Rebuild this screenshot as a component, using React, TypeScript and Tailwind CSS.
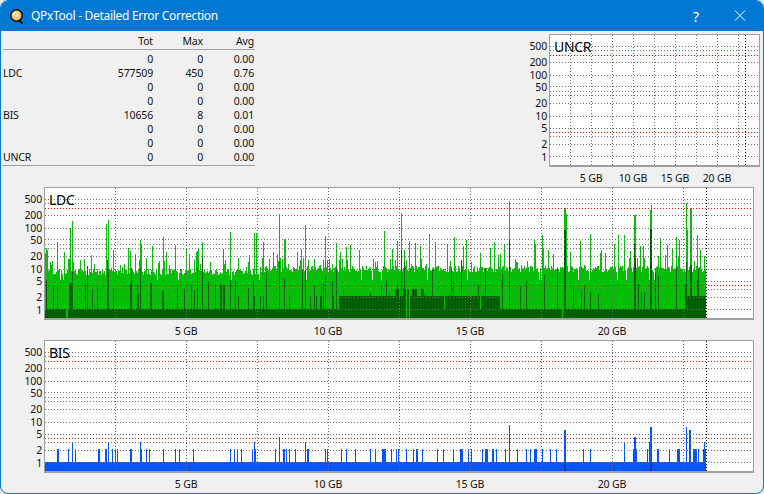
import type { ReactNode } from "react";

// y rows of the log scale, measured from the top edge of a chart frame
const yLabels: [string, number][] = [["500", 12], ["200", 28], ["100", 41], ["50", 53], ["20", 69], ["10", 82], ["5", 94], ["2", 110], ["1", 123]];
const greyRows = [12, 16, 28, 41, 52, 57, 61, 69, 82, 94, 102, 110, 122];
const redRows = [21, 98];

const bigTicks = [115, 186, 257, 328, 399, 470, 541, 612, 683];
const smallTicks = [570, 591, 612, 633, 654, 675, 696, 717, 738];

const rows = [
  ["", "0", "0", "0.00"],
  ["LDC", "577509", "450", "0.76"],
  ["", "0", "0", "0.00"],
  ["", "0", "0", "0.00"],
  ["BIS", "10656", "8", "0.01"],
  ["", "0", "0", "0.00"],
  ["", "0", "0", "0.00"],
  ["UNCR", "0", "0", "0.00"],
];

function rng(seed: number) {
  return () => {
    seed = (seed + 0x6d2b79f5) | 0;
    let t = Math.imul(seed ^ (seed >>> 15), 1 | seed);
    t = (t + Math.imul(t ^ (t >>> 7), 61 | t)) ^ t;
    return ((t ^ (t >>> 14)) >>> 0) / 4294967296;
  };
}

// [x, top row on screen] read off the screenshot
const ldcPeaks: [number, number][] = [
  [46, 248], [47, 250], [50, 262], [57, 242], [64, 252], [68, 259], [69, 259], [70, 228], [72, 221], [80, 260], [84, 259], [106, 224], [108, 220],
  [130, 251], [135, 254], [140, 240], [141, 245], [152, 246], [163, 237], [175, 245], [189, 254], [196, 252], [197, 251], [202, 242], [223, 249], [230, 232], [238, 258], [249, 255], [254, 233], [256, 233],
  [263, 242], [279, 214], [284, 239], [285, 240], [305, 225], [325, 236], [336, 243], [346, 247], [384, 231], [397, 241], [401, 213], [404, 250], [409, 241], [415, 243], [420, 246], [429, 234], [435, 242], [447, 244], [454, 237], [463, 246], [466, 240], [494, 242], [509, 201],
  [517, 262], [534, 239], [535, 244], [542, 235], [553, 254], [564, 208], [565, 208], [566, 214], [580, 241], [590, 234], [601, 250], [614, 244], [618, 235], [624, 235], [634, 215], [635, 215], [643, 246], [650, 210], [651, 205], [660, 238], [665, 255], [676, 237], [679, 240], [686, 203], [687, 230], [690, 208], [691, 208], [697, 235], [700, 250], [704, 256],
];
const ldcDarkPeaks: [number, number][] = [
  [46, 280], [57, 285], [69, 283], [70, 283], [71, 283], [72, 272], [85, 283], [107, 260], [108, 270], [130, 284], [137, 284], [140, 268], [150, 283], [151, 283], [163, 290], [197, 268], [202, 258], [223, 285], [224, 285], [230, 280],
  [279, 262], [284, 278], [305, 270], [325, 277], [401, 250], [404, 262], [451, 270], [461, 260], [509, 240], [564, 230], [565, 230], [634, 244], [635, 258], [650, 229], [651, 229], [676, 268], [686, 262], [690, 265], [691, 265], [697, 280],
];
const ldcNotches = [66, 67, 406, 409, 562];

function buildLdc() {
  const r = rng(71);
  const light: number[] = [];
  const dark: number[] = [];
  for (let x = 45; x < 706; x++) {
    const base = x < 260 ? 275 : 272;
    let top = base - Math.floor(r() * 7);
    const roll = r();
    if (roll < 0.13) top = 258 + Math.floor(r() * 12);
    else if (roll < 0.18) top = 245 + Math.floor(r() * 14);
    else if (roll < 0.22) top = 280;
    light.push(top);

    let d = 309;
    if (x >= 339 && x < 500) d = 296;
    if (x >= 685) d = 296;
    const dr = r();
    if (x >= 395 && x < 425 && r() > 0.35) d = 289;
    if (dr < 0.08) d = Math.min(d, 281 + Math.floor(r() * 14));
    else if (dr < 0.1) d = Math.min(d, 266 + Math.floor(r() * 12));
    if (x >= 235 && x < 339 && dr > 0.85) d = 296;
    dark.push(d);
  }
  for (const [x, top] of ldcPeaks) light[x - 45] = top;
  for (const [x, top] of ldcDarkPeaks) dark[x - 45] = top;
  for (const x of ldcNotches) dark[x - 45] = 319;
  dark[444 - 45] = 309;
  dark[480 - 45] = 309;
  return { light, dark };
}

const ldc = buildLdc();

const columns = (tops: number[], origin: number, clip?: number) =>
  tops
    .map((top, i) => `M${45 + i + 0.5} ${(clip ? Math.max(top, clip) : top) - origin}V132`)
    .join("");

// [x, width, top row below the frame edge]
const bisSpikes: [number, number, number][] = [
  [57, 2, 109], [68, 1, 109], [72, 1, 102], [75, 1, 109], [98, 2, 109], [105, 2, 109], [108, 1, 102], [112, 1, 109], [115, 1, 109], [117, 1, 109], [130, 2, 109], [140, 1, 102], [141, 1, 109], [146, 1, 109], [149, 1, 109], [163, 1, 109], [175, 1, 109], [179, 1, 109], [193, 1, 109], [230, 1, 109], [234, 1, 109], [237, 1, 109], [241, 1, 109], [252, 1, 109], [254, 1, 102], [255, 1, 109],
  [275, 1, 109], [279, 1, 97], [283, 2, 109], [286, 1, 109], [289, 1, 109], [295, 1, 109], [305, 1, 102], [307, 2, 109], [325, 1, 109], [327, 1, 109], [341, 1, 109], [346, 1, 109], [355, 1, 109], [370, 1, 109], [375, 1, 109], [382, 4, 109], [391, 1, 109], [396, 1, 109], [398, 1, 109], [406, 1, 109], [413, 1, 109], [416, 2, 109], [422, 1, 109], [437, 1, 109], [443, 1, 109], [453, 1, 109], [460, 3, 109], [468, 1, 109], [471, 1, 109], [482, 1, 109], [485, 3, 109], [492, 2, 109], [496, 1, 109], [505, 1, 109], [509, 1, 85],
  [517, 1, 109], [526, 1, 109], [530, 1, 109], [534, 3, 109], [542, 1, 109], [550, 1, 109], [556, 1, 109], [564, 2, 90], [583, 1, 109], [590, 1, 109], [624, 1, 102], [633, 4, 109], [634, 2, 97], [647, 1, 109], [650, 2, 87], [649, 1, 102], [657, 2, 109], [669, 1, 109], [677, 3, 109], [686, 1, 87], [689, 2, 90], [693, 4, 109], [698, 1, 109], [703, 3, 109], [704, 1, 102],
];

function Grid({ x, width, ticks, end }: { x: number; width: number; ticks: number[]; end: number }) {
  return (
    <g shapeRendering="crispEdges" strokeWidth="1" fill="none">
      {greyRows.map((y) => (
        <path key={y} d={`M${x} ${y + 0.5}h${width}`} stroke="#707070" strokeDasharray="1 2" />
      ))}
      {redRows.map((y) => (
        <path key={y} d={`M${x} ${y + 0.5}h${width}`} stroke="#ff0000" strokeDasharray="1 2" />
      ))}
      {ticks.map((t) => (
        <path key={t} d={`M${t + 0.5} 1V132`} stroke="#707070" strokeDasharray="1 2" />
      ))}
      <path d={`M${end + 0.5} 1V132`} stroke="#000000" strokeDasharray="1 2" />
    </g>
  );
}

function Chart({ label, left, width, axis, ticks, end, xLabels, children }: { label: string; left: number; width: number; axis: number; ticks: number[]; end: number; xLabels: [string, number][]; children?: ReactNode }) {
  const inner = width - 2;
  return (
    <div className="flex h-[153px] items-start">
      <div className="relative h-[133px] shrink-0" style={{ width: axis }}>
        {yLabels.map(([text, y]) => (
          <span key={text} className="absolute right-[2px] -translate-y-1/2 leading-[10px]" style={{ top: y }}>
            {text}
          </span>
        ))}
      </div>
      <div className="relative">
        <div className="h-[133px] border border-b-2 border-[#a0a0a0] bg-white" style={{ width }}>
          <svg width={inner} height={130} viewBox={`${left + 1} 1 ${inner} 130`} className="block">
            {children}
            <Grid x={left + 1} width={inner} ticks={ticks} end={end} />
          </svg>
        </div>
        <span className="absolute left-[5px] top-[5px] text-[14px] leading-[16px] tracking-[-0.3px] text-black">{label}</span>
        {xLabels.map(([text, x]) => (
          <span key={text} className="absolute top-[137px] -translate-x-1/2 whitespace-nowrap leading-[14px]" style={{ left: x - left }}>
            {text}
          </span>
        ))}
      </div>
    </div>
  );
}

function AppIcon() {
  return (
    <svg width="15" height="15" viewBox="0 0 15 15" className="shrink-0">
      <path d="M9 11l3 3" stroke="#111" strokeWidth="2" strokeLinecap="round" />
      <circle cx="6.5" cy="6.5" r="5.7" fill="#f4c96a" stroke="#0c0c0c" strokeWidth="1.5" />
      <circle cx="5.8" cy="5.6" r="2.4" fill="#fff6df" />
      <circle cx="5.8" cy="5.8" r="0.8" fill="#8a7a58" />
    </svg>
  );
}

export default function App() {
  return (
    <div className="h-[494px] w-[764px] bg-[#e4e6e8] font-['Noto_Sans',sans-serif] text-[10.5px] tracking-[-0.15px] text-[#111]">
      <div className="flex h-full flex-col overflow-hidden rounded-lg border border-[#0078d4] bg-[#f0f0f0]">
        <header className="flex h-[30px] shrink-0 items-center bg-[#0078d4] pl-[9px] text-white">
          <AppIcon />
          <span className="ml-[6px] text-[12px] tracking-[-0.3px]">QPxTool - Detailed Error Correction</span>
          <span className="ml-auto w-[42px] text-center text-[14px]">?</span>
          <svg width="46" height="30" viewBox="0 0 46 30" className="shrink-0">
            <path d="M18 9.5l10 10M28 9.5l-10 10" stroke="#fff" strokeWidth="1" fill="none" />
          </svg>
        </header>

        <div className="flex justify-between pr-[3px] pt-[3px]">
          <div className="ml-[2px] mt-[1px] w-[252px]">
            <div className="grid h-[15px] grid-cols-[90px_60px_50px_51px] items-center border-b border-[#a0a0a0] pb-[1px] text-right leading-none">
              <span />
              <span>Tot</span>
              <span>Max</span>
              <span>Avg</span>
            </div>
            <div className="border-b border-[#a0a0a0] pb-[1px] pt-[2px]">
              {rows.map((row, i) => (
                <div key={i} className="grid h-[14px] grid-cols-[90px_60px_50px_51px] items-center text-right leading-none">
                  <span className="text-left">{row[0]}</span>
                  <span>{row[1]}</span>
                  <span>{row[2]}</span>
                  <span>{row[3]}</span>
                </div>
              ))}
            </div>
          </div>
          <Chart label="UNCR" left={549} width={211} axis={30} ticks={smallTicks} end={745} xLabels={[["5 GB", 591], ["10 GB", 633], ["15 GB", 675], ["20 GB", 717]]} />
        </div>

        <Chart label="LDC" left={44} width={710} axis={43} ticks={bigTicks} end={706} xLabels={[["5 GB", 186], ["10 GB", 328], ["15 GB", 470], ["20 GB", 612]]}>
          <g shapeRendering="crispEdges" fill="none" strokeWidth="1">
            <path d={columns(ldc.light, 187)} stroke="#08bc08" />
            <path d={columns(ldc.light, 187, 279)} stroke="#00c000" />
            <path d={columns(ldc.dark, 187)} stroke="#005f00" />
          </g>
        </Chart>

        <Chart label="BIS" left={44} width={710} axis={43} ticks={bigTicks} end={706} xLabels={[["5 GB", 186], ["10 GB", 328], ["15 GB", 470], ["20 GB", 612]]}>
          <g shapeRendering="crispEdges" fill="#0055ff">
            <rect x="45" y="122" width="661" height="10" />
            {bisSpikes.map(([x, w, top], i) => (
              <rect key={i} x={x} y={top} width={w} height={132 - top} />
            ))}
            <rect x="564" y="122" width="2" height="10" fill="#003a96" />
            <rect x="650" y="122" width="2" height="10" fill="#003a96" />
          </g>
        </Chart>
      </div>
    </div>
  );
}
